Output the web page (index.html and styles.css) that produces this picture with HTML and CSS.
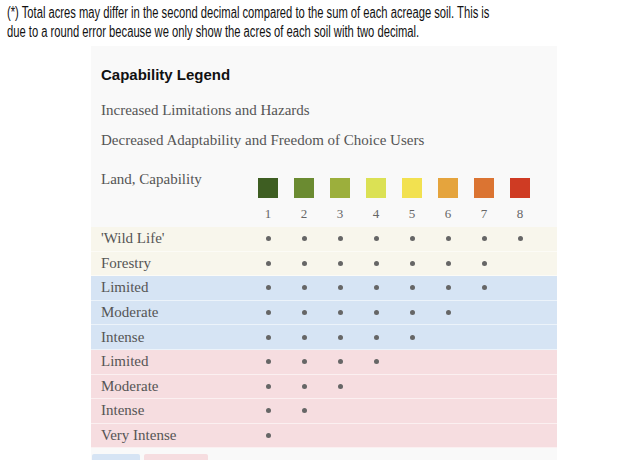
FILE: index.html
```html
<!DOCTYPE html>
<html lang="en">
<head>
    <meta charset="UTF-8">
    <title>Capability Legend</title>
    <link rel="stylesheet" href="styles.css">
</head>
<body>
    <div class="note-box">
        <p class="note">(*) Total acres may differ in the second decimal compared to the sum of each acreage soil. This is due to a round error because we only show the acres of each soil with two decimal.</p>
    </div>

    <div class="legend">
        <h3>Capability Legend</h3>
        <p class="line first">Increased Limitations and Hazards</p>
        <p class="line">Decreased Adaptability and Freedom of Choice Users</p>

        <div class="row head">
            <span class="label">Land, Capability</span>
            <span class="cell"><i class="sw c1"></i></span>
            <span class="cell"><i class="sw c2"></i></span>
            <span class="cell"><i class="sw c3"></i></span>
            <span class="cell"><i class="sw c4"></i></span>
            <span class="cell"><i class="sw c5"></i></span>
            <span class="cell"><i class="sw c6"></i></span>
            <span class="cell"><i class="sw c7"></i></span>
            <span class="cell"><i class="sw c8"></i></span>
        </div>
        <div class="row nums">
            <span class="label"></span>
            <span class="cell">1</span><span class="cell">2</span><span class="cell">3</span><span class="cell">4</span>
            <span class="cell">5</span><span class="cell">6</span><span class="cell">7</span><span class="cell">8</span>
        </div>

        <div id="rows"></div>

        <div class="tabs">
            <span class="tab blue"></span>
            <span class="tab pink"></span>
        </div>
    </div>

<script>
    const data = [
        ["'Wild Life'", 8, "cream"],
        ["Forestry", 7, "cream"],
        ["Limited", 7, "blue"],
        ["Moderate", 6, "blue"],
        ["Intense", 5, "blue"],
        ["Limited", 4, "pink"],
        ["Moderate", 3, "pink"],
        ["Intense", 2, "pink"],
        ["Very Intense", 1, "pink"]
    ];

    document.getElementById('rows').innerHTML = data.map(([name, n, tone]) => {
        let cells = "";
        for (let i = 1; i <= 8; i++) {
            cells += `<span class="cell">${i <= n ? '<b class="dot"></b>' : ''}</span>`;
        }
        return `<div class="row use ${tone}"><span class="label">${name}</span>${cells}</div>`;
    }).join("");
</script>
</body>
</html>
```

FILE: styles.css
```css
html, body { overflow: hidden; }
body { margin: 0; background: #fff; color: #111; font-family: "Liberation Sans", Arial, sans-serif; }
/* narrow face isn't available, so squeeze the regular one */
.note-box { width: 640px; height: 41px; overflow: hidden; }
.note { width: 706px; margin: 0; padding: 3px 0 0 10px; font-size: 16px; line-height: 19px; transform: scaleX(0.70); transform-origin: 0 0; }

.legend { width: 466px; height: 394px; margin: 5px 0 0 91px; background: #f9f9f9; padding-top: 20px; overflow: hidden; font-family: "Liberation Serif", "Times New Roman", serif; color: #555; }
.legend h3 { margin: 0 0 0 10px; font-family: "Liberation Sans", Arial, sans-serif; font-size: 15px; line-height: 18px; color: #111; }
.line { margin: 10px 0 0 10px; font-size: 15px; line-height: 20px; }
.line.first { margin-top: 16px; }

.row { display: grid; grid-template-columns: 159px repeat(8, 36px); align-items: center; }
.label { padding-left: 10px; font-size: 15px; }
.cell { display: flex; justify-content: center; align-items: center; font-size: 13px; }

.head { height: 30px; margin-top: 18px; align-items: start; }
.head .label { padding-top: 1px; line-height: 20px; }
.sw { display: block; width: 20px; height: 20px; margin-top: 10px; }
.nums { height: 24px; margin-top: 4px; color: #666; }

.c1 { background: #3e5e22; }
.c2 { background: #6b8b31; }
.c3 { background: #9caf3c; }
.c4 { background: #dbe154; }
.c5 { background: #f2e150; }
.c6 { background: #e5a43d; }
.c7 { background: #db7432; }
.c8 { background: #cf3b23; }

#rows { margin-top: 1px; }
.use { height: 23.6px; border-bottom: 1px solid rgba(255, 255, 255, 0.55); }
.cream { background: #f8f6ec; }
.blue { background: #d6e4f4; }
.pink { background: #f6dde0; }
.dot { display: block; width: 5px; height: 5px; border-radius: 50%; background: #666; }

.tabs { display: flex; gap: 4px; margin: 6px 0 0 1px; }
.tab { display: block; width: 48px; height: 20px; border-radius: 2px; }
.tab.pink { width: 64px; }
```
